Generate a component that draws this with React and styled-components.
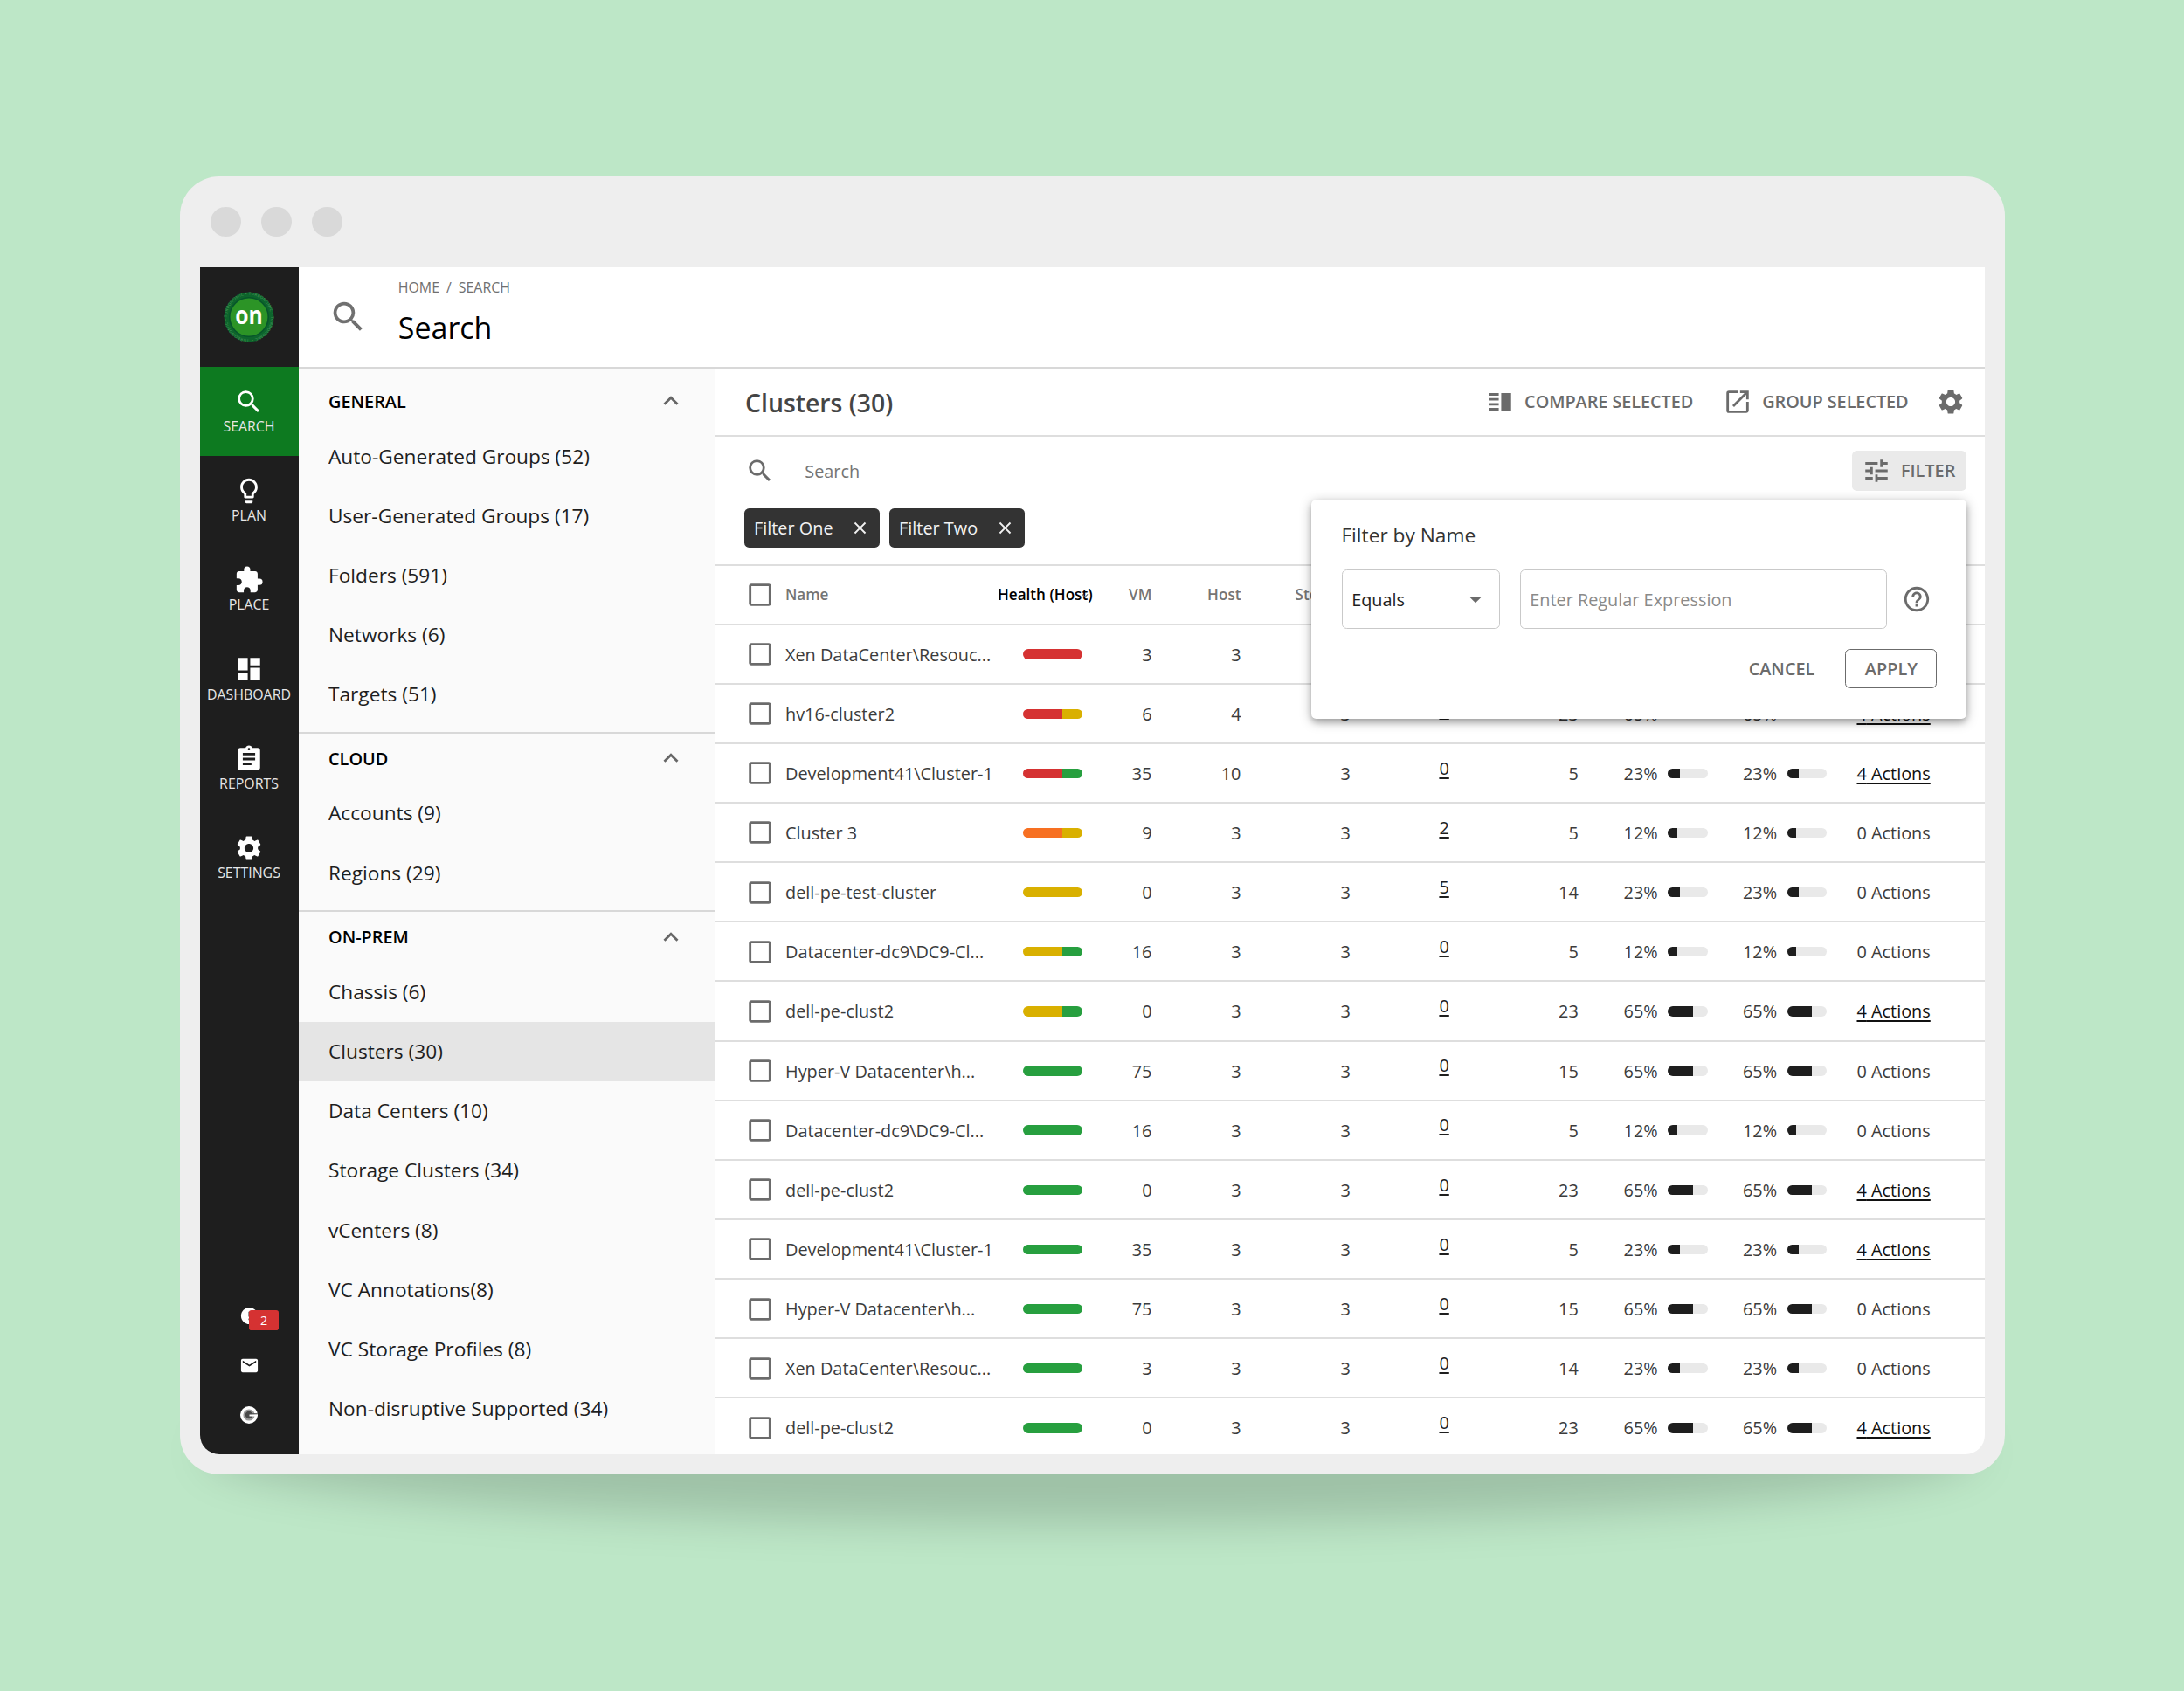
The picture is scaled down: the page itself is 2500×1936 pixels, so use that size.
import React from "react";
import styled, { createGlobalStyle } from "styled-components";
import {
  MdArrowDropDown,
  MdAssignment,
  MdCheckBoxOutlineBlank,
  MdClose,
  MdDashboard,
  MdEmail,
  MdError,
  MdExpandLess,
  MdExpandMore,
  MdExtension,
  MdHelpOutline,
  MdLightbulbOutline,
  MdOpenInNew,
  MdSearch,
  MdSettings,
  MdTune,
  MdVerticalSplit,
} from "react-icons/md";

const RED = "#d53232";
const ORANGE = "#f77022";
const YELLOW = "#d9b000";
const GREEN = "#279f3f";

const navItems = [
  { label: "SEARCH", icon: MdSearch, active: true },
  { label: "PLAN", icon: MdLightbulbOutline },
  { label: "PLACE", icon: MdExtension },
  { label: "DASHBOARD", icon: MdDashboard },
  { label: "REPORTS", icon: MdAssignment },
  { label: "SETTINGS", icon: MdSettings },
];

const sections = [
  {
    title: "GENERAL",
    items: [
      "Auto-Generated Groups (52)",
      "User-Generated Groups (17)",
      "Folders (591)",
      "Networks (6)",
      "Targets (51)",
    ],
  },
  { title: "CLOUD", items: ["Accounts (9)", "Regions (29)"] },
  {
    title: "ON-PREM",
    items: [
      "Chassis (6)",
      "Clusters (30)",
      "Data Centers (10)",
      "Storage Clusters (34)",
      "vCenters (8)",
      "VC Annotations(8)",
      "VC Storage Profiles (8)",
      "Non-disruptive Supported (34)",
    ],
  },
];

// name, health colors, vm, host, storage, vdc, datastore, cpu/mem %, actions
const clusters = [
  ["Xen DataCenter\\Resouc...", [RED], 3, 3, 3, 0, 14, 23, 0],
  ["hv16-cluster2", [RED, YELLOW], 6, 4, 3, 0, 23, 65, 4],
  ["Development41\\Cluster-1", [RED, GREEN], 35, 10, 3, 0, 5, 23, 4],
  ["Cluster 3", [ORANGE, YELLOW], 9, 3, 3, 2, 5, 12, 0],
  ["dell-pe-test-cluster", [YELLOW], 0, 3, 3, 5, 14, 23, 0],
  ["Datacenter-dc9\\DC9-Cl...", [YELLOW, GREEN], 16, 3, 3, 0, 5, 12, 0],
  ["dell-pe-clust2", [YELLOW, GREEN], 0, 3, 3, 0, 23, 65, 4],
  ["Hyper-V Datacenter\\h...", [GREEN], 75, 3, 3, 0, 15, 65, 0],
  ["Datacenter-dc9\\DC9-Cl...", [GREEN], 16, 3, 3, 0, 5, 12, 0],
  ["dell-pe-clust2", [GREEN], 0, 3, 3, 0, 23, 65, 4],
  ["Development41\\Cluster-1", [GREEN], 35, 3, 3, 0, 5, 23, 4],
  ["Hyper-V Datacenter\\h...", [GREEN], 75, 3, 3, 0, 15, 65, 0],
  ["Xen DataCenter\\Resouc...", [GREEN], 3, 3, 3, 0, 14, 23, 0],
  ["dell-pe-clust2", [GREEN], 0, 3, 3, 0, 23, 65, 4],
];

// a 12% fill still shows its rounded start
const fillWidth = { 12: 23, 23: 30, 65: 63 };

function Logo() {
  return (
    <svg width="58" height="58" viewBox="0 0 58 58">
      <defs>
        <path id="ring" d="M29 54.2a25.2 25.2 0 1 1 .01 0" />
      </defs>
      <circle cx="29" cy="29" r="28.4" fill="#0d652c" />
      <circle cx="29" cy="29" r="22.2" fill="#2c9426" stroke="#07552b" strokeWidth="1.6" />
      <LogoRing>
        <textPath href="#ring" textLength="155">
          TURBONOMIC • TURBONOMIC • TURBONOMIC • TURBONOMIC •
        </textPath>
      </LogoRing>
      <LogoWord x="29" y="37.4" textLength="31.5" lengthAdjust="spacingAndGlyphs">
        on
      </LogoWord>
    </svg>
  );
}

function Gauge() {
  return (
    <svg width="22" height="22" viewBox="0 0 22 22">
      <circle cx="11" cy="11" r="10" fill="#fff" />
      <circle cx="11" cy="11" r="6.6" fill="#9b9b9b" />
      <circle cx="11" cy="11" r="4.2" fill="#4a4a4a" />
      <path d="M11 9.2h9.8v1.4H11z" fill="#4a4a4a" />
      <path d="M11.5 10.6h9.5c-.1.8-.3 1.3-.5 1.8h-9z" fill="#fff" />
    </svg>
  );
}

function NavRail() {
  return (
    <Nav>
      <LogoBox>
        <Logo />
      </LogoBox>
      {navItems.map(({ label, icon: Icon, active }) => (
        <NavItem key={label} $active={active}>
          <Icon size={34} />
          <NavLabel>{label}</NavLabel>
        </NavItem>
      ))}
      <NavFooter>
        <FooterIcon>
          <MdError size={23} />
          <Badge>2</Badge>
        </FooterIcon>
        <FooterIcon>
          <MdEmail size={23} />
        </FooterIcon>
        <FooterIcon>
          <Gauge />
        </FooterIcon>
      </NavFooter>
    </Nav>
  );
}

function CategoryList() {
  return (
    <Sidebar>
      {sections.map((section) => (
        <Section key={section.title}>
          <SectionHead>
            {section.title}
            <MdExpandLess size={34} />
          </SectionHead>
          {section.items.map((item) => (
            <SectionItem key={item} $selected={item === "Clusters (30)"}>
              {item}
            </SectionItem>
          ))}
        </Section>
      ))}
    </Sidebar>
  );
}

function Usage({ value }) {
  return (
    <UsageCell>
      {value}%
      <UsageBar>
        <UsageFill style={{ width: `${fillWidth[value]}%` }} />
      </UsageBar>
    </UsageCell>
  );
}

function FilterPopover() {
  return (
    <Popover>
      <PopoverTitle>Filter by Name</PopoverTitle>
      <PopoverFields>
        <Select>
          Equals
          <MdArrowDropDown size={34} />
        </Select>
        <Input placeholder="Enter Regular Expression" />
        <MdHelpOutline size={34} />
      </PopoverFields>
      <PopoverActions>
        <TextButton>CANCEL</TextButton>
        <OutlineButton>APPLY</OutlineButton>
      </PopoverActions>
    </Popover>
  );
}

function ClusterTable() {
  return (
    <Table>
      <Row $head>
        <MdCheckBoxOutlineBlank size={34} />
        <span>Name</span>
        <SortedHead>
          Health (Host)
          <MdExpandMore size={14} />
        </SortedHead>
        <Num>VM</Num>
        <Num>Host</Num>
        <Num>Storage</Num>
      </Row>
      {clusters.map(([name, health, vm, host, storage, vdc, ds, pct, actions], i) => (
        <Row key={i}>
          <MdCheckBoxOutlineBlank size={34} />
          <span>{name}</span>
          <HealthBar>
            {health.map((color, n) => (
              <HealthPart key={n} $color={color} $grow={n === 0 ? 2 : 1} />
            ))}
          </HealthBar>
          <Num>{vm}</Num>
          <Num>{host}</Num>
          <Num>{storage}</Num>
          <RaisedLink>{vdc}</RaisedLink>
          <Num>{ds}</Num>
          <Usage value={pct} />
          <Usage value={pct} />
          <Actions $link={actions > 0}>{actions} Actions</Actions>
        </Row>
      ))}
    </Table>
  );
}

function App() {
  return (
    <Page>
      <GlobalStyle />
      <Shadow />
      <Frame>
        <TitleBar>
          <Dot />
          <Dot />
          <Dot />
        </TitleBar>
        <Screen>
          <NavRail />
          <Body>
            <PageHeader>
              <MdSearch size={45.4} />
              <div>
                <Breadcrumb>
                  <span>HOME</span>
                  <span>/</span>
                  <span>SEARCH</span>
                </Breadcrumb>
                <PageTitle>Search</PageTitle>
              </div>
            </PageHeader>
            <Columns>
              <CategoryList />
              <Main>
                <Toolbar>
                  <ToolbarTitle>Clusters (30)</ToolbarTitle>
                  <ToolButton $space={34}>
                    <MdVerticalSplit size={34} />
                    COMPARE SELECTED
                  </ToolButton>
                  <ToolButton $space={31.5}>
                    <MdOpenInNew size={34} />
                    GROUP SELECTED
                  </ToolButton>
                  <MdSettings size={34} />
                </Toolbar>
                <SearchArea>
                  <SearchRow>
                    <MdSearch size={34} />
                    <SearchInput placeholder="Search" />
                    <FilterButton>
                      <MdTune size={34} />
                      FILTER
                    </FilterButton>
                    <FilterPopover />
                  </SearchRow>
                  <Chips>
                    <Chip>
                      Filter One
                      <MdClose size={23} />
                    </Chip>
                    <Chip>
                      Filter Two
                      <MdClose size={23} />
                    </Chip>
                  </Chips>
                </SearchArea>
                <ClusterTable />
              </Main>
            </Columns>
          </Body>
        </Screen>
      </Frame>
    </Page>
  );
}

const GlobalStyle = createGlobalStyle`
  *, *::before, *::after {
    box-sizing: border-box;
  }
  body {
    margin: 0;
    font-family: "Open Sans", "Noto Sans", sans-serif;
    font-size: 19.87px;
    color: #3c3c3c;
  }
  button, input {
    font: inherit;
    color: inherit;
    border: none;
    background: none;
    padding: 0;
  }
  svg {
    display: block;
    flex: none;
  }
`;

const Page = styled.div`
  position: relative;
  width: 2500px;
  height: 1936px;
  padding: 202px 0 0 206px;
  background: #bde7c7;
  overflow: hidden;
`;

const Shadow = styled.div`
  position: absolute;
  left: 235px;
  top: 1580px;
  width: 2030px;
  height: 164px;
  border-radius: 50%;
  background: rgba(0, 0, 0, 0.16);
  filter: blur(24px);
`;

const Frame = styled.div`
  position: relative;
  width: 2089.4px;
  height: 1485.6px;
  padding: 0 23px;
  border-radius: 45px;
  background: #eee;
`;

const TitleBar = styled.div`
  display: flex;
  align-items: center;
  gap: 23.3px;
  height: 104px;
  padding-left: 12px;
`;

const Dot = styled.i`
  width: 34.8px;
  height: 34.8px;
  border-radius: 50%;
  background: #d9d9d9;
`;

const Screen = styled.div`
  display: flex;
  height: 1358.6px;
  border-radius: 0 0 22px 22px;
  background: #fff;
  overflow: hidden;
`;

const Nav = styled.nav`
  display: flex;
  flex-direction: column;
  flex: none;
  width: 113px;
  padding-right: 1px;
  background: #1e1e1e;
  color: #fff;
`;

const LogoBox = styled.div`
  display: flex;
  align-items: center;
  justify-content: center;
  height: 114px;
`;

const LogoRing = styled.text`
  font-size: 4.6px;
  fill: #4f9a5f;
`;

const LogoWord = styled.text`
  font-size: 28.5px;
  font-weight: 700;
  text-anchor: middle;
  fill: #fff;
`;

const NavItem = styled.a`
  display: flex;
  flex-direction: column;
  align-items: center;
  height: 102.25px;
  margin-right: -1px;
  padding: 22.5px 1px 0 0;
  background: ${(p) => (p.$active ? "#0d7a20" : "transparent")};
`;

const NavLabel = styled.span`
  margin-top: 1.3px;
  font-size: 15.9px;
  line-height: 20px;
  color: #e6e6e6;
`;

const NavFooter = styled.div`
  margin-top: auto;
  padding-bottom: 16.4px;
`;

const FooterIcon = styled.div`
  position: relative;
  display: flex;
  align-items: center;
  justify-content: center;
  height: 56.8px;
`;

const Badge = styled.span`
  position: absolute;
  left: 56px;
  top: 22.5px;
  width: 34.3px;
  height: 23px;
  border-radius: 2.8px;
  background: #d53232;
  font-size: 14.2px;
  line-height: 23px;
  text-align: center;
`;

const Body = styled.div`
  display: flex;
  flex-direction: column;
  flex: 1;
  min-width: 0;
`;

const PageHeader = styled.header`
  display: flex;
  align-items: center;
  gap: 34.6px;
  flex: none;
  height: 116px;
  padding-left: 33.8px;
  border-bottom: 2px solid #d8d8d8;
  color: #707070;
`;

const Breadcrumb = styled.div`
  display: flex;
  gap: 8px;
  font-size: 15.9px;
  line-height: 22px;
`;

const PageTitle = styled.h1`
  margin: 11px 0 10px;
  font-size: 34px;
  font-weight: 400;
  line-height: 48px;
  color: #000;
`;

const Columns = styled.div`
  display: flex;
  flex: 1;
  min-height: 0;
`;

const Sidebar = styled.aside`
  flex: none;
  width: 477px;
  border-right: 1px solid #e0e0e0;
  background: #fafafa;
`;

const Section = styled.section`
  padding-bottom: 9px;
  border-bottom: 2px solid #d8d8d8;

  &:first-child {
    padding-top: 8.7px;
  }

  &:last-child {
    border-bottom: none;
  }
`;

const SectionHead = styled.h2`
  display: flex;
  align-items: center;
  justify-content: space-between;
  height: 57.3px;
  margin: 0;
  padding: 0 33px 0 34px;
  font-size: 19.87px;
  font-weight: 600;
  color: #000;

  svg {
    color: #666;
  }
`;

const SectionItem = styled.a`
  display: flex;
  align-items: center;
  height: 68.13px;
  padding-left: 34px;
  font-size: 22.7px;
  color: #1e1e1e;
  background: ${(p) => (p.$selected ? "#e5e5e5" : "transparent")};
`;

const Main = styled.main`
  flex: 1;
  min-width: 0;
`;

const Toolbar = styled.div`
  display: flex;
  align-items: center;
  height: 78px;
  padding: 0 22.3px 1px 34px;
  border-bottom: 2px solid #dedede;
  font-weight: 600;
  color: #6b6b6b;
`;

const ToolbarTitle = styled.h2`
  flex: 1;
  margin: 2px 0 0;
  font-size: 28.4px;
  font-weight: 600;
  color: #454545;
`;

const ToolButton = styled.button`
  display: flex;
  align-items: center;
  gap: 11px;
  margin-right: ${(p) => p.$space}px;
  font-weight: 600;
  letter-spacing: -0.06px;
`;

const SearchArea = styled.div`
  display: flex;
  flex-direction: column;
  height: 147.5px;
  padding-left: 33px;
  border-bottom: 2px solid #dedede;
`;

const SearchRow = styled.div`
  position: relative;
  display: flex;
  align-items: center;
  height: 78px;
  padding-right: 21.5px;
  color: #6b6b6b;
  z-index: 1;

  > svg {
    margin-left: 1.3px;
  }
`;

const SearchInput = styled.input`
  flex: 1;
  margin-left: 34px;
  outline: none;

  &::placeholder {
    color: #757575;
  }
`;

const FilterButton = styled.button`
  display: flex;
  align-items: center;
  gap: 11px;
  width: 131px;
  height: 45.4px;
  padding-left: 11px;
  border-radius: 5.6px;
  background: #eaeaea;
  font-weight: 600;
`;

const Chips = styled.div`
  display: flex;
  gap: 11.4px;
  padding-top: 4px;
`;

const Chip = styled.span`
  display: flex;
  align-items: center;
  justify-content: space-between;
  width: 154.7px;
  height: 45.4px;
  padding: 0 11px;
  border-radius: 5.6px;
  background: #333;
  color: #f2f2f2;
`;

const Popover = styled.div`
  position: absolute;
  top: 72.3px;
  right: 21px;
  width: 750px;
  height: 250.3px;
  padding: 24px 34px 0;
  border-radius: 5.6px;
  background: #fff;
  box-shadow: 0 3px 14px rgba(0, 0, 0, 0.28), 0 4px 6px rgba(0, 0, 0, 0.2);
`;

const PopoverTitle = styled.div`
  font-size: 22.7px;
  line-height: 34px;
  color: #333;
`;

const PopoverFields = styled.div`
  display: flex;
  align-items: center;
  margin-top: 22px;
  padding-left: 0.8px;

  > svg {
    margin-left: 16.7px;
  }
`;

const Select = styled.button`
  display: flex;
  align-items: center;
  justify-content: space-between;
  width: 181px;
  height: 68px;
  padding: 0 10px;
  border: 1px solid #c9c9c9;
  border-radius: 5.6px;
  color: #1e1e1e;

  svg {
    color: #6b6b6b;
  }
`;

const Input = styled.input`
  width: 420px;
  height: 68px;
  margin-left: 23px;
  padding: 0 10px;
  border: 1px solid #c9c9c9;
  border-radius: 5.6px;

  &::placeholder {
    color: #8a8a8a;
  }
`;

const PopoverActions = styled.div`
  display: flex;
  align-items: center;
  justify-content: flex-end;
  gap: 35px;
  margin-top: 22.8px;
`;

const TextButton = styled.button`
  font-weight: 600;
`;

const OutlineButton = styled.button`
  width: 105px;
  height: 45.4px;
  border: 1.5px solid #6b6b6b;
  border-radius: 5.6px;
  font-weight: 600;
`;

const Table = styled.div`
  display: flex;
  flex-direction: column;
`;

const Row = styled.div`
  display: grid;
  grid-template-columns: 45.7px 243px 109.5px 67px 102px 125.3px 113px 148px 148px 136.4px 118.6px;
  align-items: center;
  flex: none;
  height: 68.15px;
  padding: ${(p) => (p.$head ? 0 : "0.7px")} 0 0 34.3px;
  border-bottom: 2px solid #dedede;
  white-space: nowrap;
  font-size: ${(p) => (p.$head ? "17.1px" : "19.87px")};
  font-weight: ${(p) => (p.$head ? 600 : 400)};
  color: ${(p) => (p.$head ? "#757575" : "#3c3c3c")};

  > svg {
    color: #6b6b6b;
  }
`;

const SortedHead = styled.span`
  position: relative;
  color: #000;

  svg {
    position: absolute;
    left: 93px;
    top: 6px;
    color: #6b6b6b;
  }
`;

const Num = styled.span`
  text-align: right;
`;

const HealthBar = styled.div`
  display: flex;
  width: 68.4px;
  height: 11.4px;
  margin-left: 28.8px;
  border-radius: 6px;
  overflow: hidden;
`;

const HealthPart = styled.i`
  flex: ${(p) => p.$grow};
  background: ${(p) => p.$color};
`;

const RaisedLink = styled.a`
  padding-bottom: 12.4px;
  text-align: right;
  text-decoration: underline;
  text-decoration-thickness: 1.5px;
  text-underline-offset: 3px;
  color: #1e1e1e;
`;

const UsageCell = styled.div`
  display: flex;
  align-items: center;
  justify-content: flex-end;
  gap: 11.5px;
`;

const UsageBar = styled.div`
  width: 45.6px;
  height: 11.4px;
  border-radius: 6px;
  background: #e9e9e9;
  overflow: hidden;
`;

const UsageFill = styled.div`
  height: 100%;
  background: #1e1e1e;
`;

const Actions = styled.a`
  text-align: right;
  color: ${(p) => (p.$link ? "#111" : "#3c3c3c")};
  text-decoration: ${(p) => (p.$link ? "underline" : "none")};
  text-decoration-thickness: 1.5px;
  text-underline-offset: 3px;
`;

export default App;
